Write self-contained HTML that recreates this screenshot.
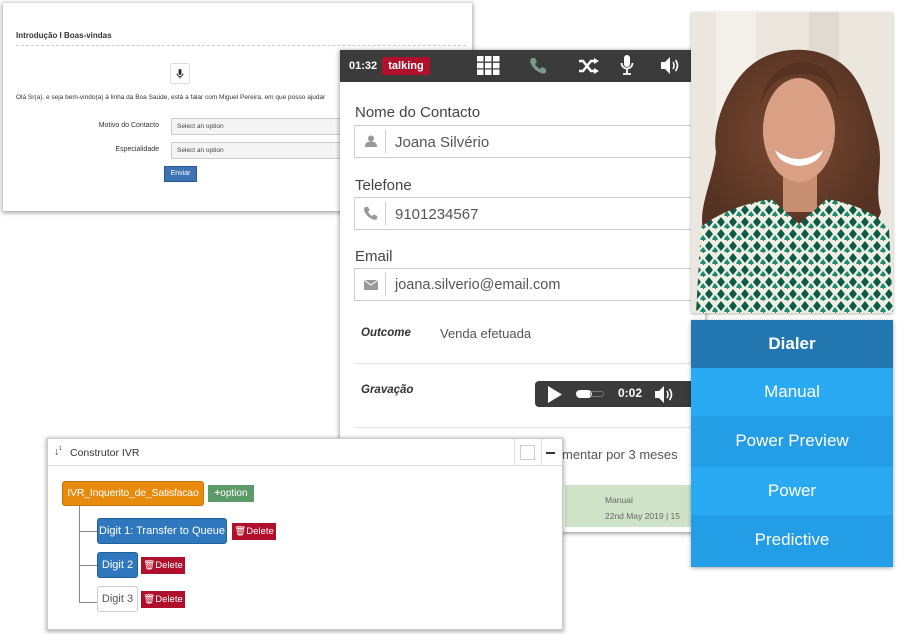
<!DOCTYPE html>
<html><head><meta charset="utf-8"><style>
*{box-sizing:border-box;margin:0;padding:0}
body{width:903px;height:634px;background:#fff;position:relative;overflow:hidden;font-family:"Liberation Sans",sans-serif}
.abs{position:absolute}
.os{font-family:"Liberation Sans",sans-serif;white-space:nowrap}
</style></head><body>

<div class="abs" style="left:3px;top:3px;width:469px;height:208px;background:#fff;box-shadow:0 1px 4px 1px rgba(0,0,0,.35)">
  <div class="abs" style="left:13px;top:28px;font-size:8px;font-weight:bold;color:#333">Introdução I Boas-vindas</div>
  <div class="abs" style="left:13px;top:42px;width:450px;border-top:1px dashed #ccc"></div>
  <div class="abs" style="left:167px;top:60px;width:20px;height:21px;border:1px solid #ddd;border-radius:2px;text-align:center">
    <svg width="8" height="10" viewBox="0 0 8 10" style="margin-top:5px"><rect x="2.5" y="0" width="3" height="6" rx="1.5" fill="#333"/><path d="M1 4.5a3 3 0 0 0 6 0M4 7.5v2" stroke="#333" fill="none"/></svg>
  </div>
  <div class="abs" style="left:13px;top:91px;font-size:6.5px;color:#333;white-space:nowrap">Olá Sr(a). e seja bem-vindo(a) à linha da Boa Saúde, está a falar com Miguel Pereira, em que posso ajudar</div>
  <div class="abs" style="left:60px;top:119px;width:96px;text-align:right;font-size:7px;color:#333">Motivo do Contacto</div>
  <div class="abs" style="left:168px;top:115px;width:180px;height:17px;border:1px solid #ccc;background:#f4f4f4;font-size:6.5px;color:#444;padding:4px 5px">Select an option</div>
  <div class="abs" style="left:60px;top:143px;width:96px;text-align:right;font-size:7px;color:#333">Especialidade</div>
  <div class="abs" style="left:168px;top:139px;width:180px;height:17px;border:1px solid #ccc;background:#f4f4f4;font-size:6.5px;color:#444;padding:4px 5px">Select an option</div>
  <div class="abs" style="left:161px;top:163px;width:33px;height:16px;background:#3d72b4;border:1px solid #2a5a96;color:#fff;font-size:7px;text-align:center;line-height:14px">Enviar</div>
</div>

<div class="abs" style="left:340px;top:50px;width:365px;height:482px;background:#fff;box-shadow:0 1px 4px 1px rgba(0,0,0,.35)">
  <div class="abs" style="left:0;top:0;width:365px;height:32px;background:#3b3b3b"></div>
  <div class="abs os" style="left:9px;top:10px;font-size:11px;font-weight:bold;color:#fff">01:32</div>
  <div class="abs os" style="left:42px;top:7px;width:48px;height:18px;background:#b0102b;border-radius:2px;color:#fff;font-size:11px;font-weight:bold;text-align:center;line-height:18px">talking</div>
  <svg class="abs" style="left:137px;top:6px" width="23" height="19" viewBox="0 0 23 19" fill="#fff"><rect x="0" y="0" width="6.5" height="5.5"/><rect x="8" y="0" width="6.5" height="5.5"/><rect x="16" y="0" width="6.5" height="5.5"/><rect x="0" y="6.8" width="6.5" height="5.5"/><rect x="8" y="6.8" width="6.5" height="5.5"/><rect x="16" y="6.8" width="6.5" height="5.5"/><rect x="0" y="13.5" width="6.5" height="5.5"/><rect x="8" y="13.5" width="6.5" height="5.5"/><rect x="16" y="13.5" width="6.5" height="5.5"/></svg>
  <svg class="abs" style="left:189px;top:7px" width="18" height="18" viewBox="0 0 18 18"><path d="M3 1l3 0 2 4-2 2c1 2 3 4 5 5l2-2 4 2 0 3c-1 2-3 2-5 1C7 14 4 11 2 7 1 5 1 2 3 1z" fill="#7a9a8a"/></svg>
  <svg class="abs" style="left:238px;top:8px" width="22" height="16" viewBox="0 0 22 16"><path d="M1 3h4l8 10h4M1 13h4l8-10h4" stroke="#fff" stroke-width="2.4" fill="none"/><path d="M16 0l5 3-5 3zM16 10l5 3-5 3z" fill="#fff"/></svg>
  <svg class="abs" style="left:280px;top:5px" width="14" height="21" viewBox="0 0 14 21"><rect x="4" y="0" width="6" height="12" rx="3" fill="#fff"/><path d="M1.5 8a5.5 5.5 0 0 0 11 0M7 14v4M3 19h8" stroke="#fff" stroke-width="1.8" fill="none"/></svg>
  <svg class="abs" style="left:321px;top:7px" width="20" height="17" viewBox="0 0 20 17"><path d="M0 5h4l5-5v17l-5-5H0z" fill="#fff"/><path d="M12 5q2 3.5 0 7M14.5 3q4 5.5 0 11" stroke="#fff" stroke-width="1.6" fill="none"/></svg>

  <div class="abs os" style="left:15px;top:54px;font-size:15px;color:#444">Nome do Contacto</div>
  <div class="abs" style="left:14px;top:75px;width:360px;height:33px;border:1px solid #ccc"></div>
  <div class="abs" style="left:45px;top:80px;height:23px;border-left:1px solid #ccc"></div>
  <svg class="abs" style="left:25px;top:85px" width="12" height="12" viewBox="0 0 12 12" fill="#999"><circle cx="6" cy="3.5" r="3"/><path d="M0 12c0-4 2-5.5 6-5.5s6 1.5 6 5.5z"/></svg>
  <div class="abs os" style="left:55px;top:84px;font-size:15px;color:#555">Joana Silvério</div>

  <div class="abs os" style="left:15px;top:127px;font-size:15px;color:#444">Telefone</div>
  <div class="abs" style="left:14px;top:147px;width:360px;height:33px;border:1px solid #ccc"></div>
  <div class="abs" style="left:45px;top:152px;height:23px;border-left:1px solid #ccc"></div>
  <svg class="abs" style="left:23px;top:156px" width="15" height="15" viewBox="0 0 18 18"><path d="M3 1l3 0 2 4-2 2c1 2 3 4 5 5l2-2 4 2 0 3c-1 2-3 2-5 1C7 14 4 11 2 7 1 5 1 2 3 1z" fill="#999"/></svg>
  <div class="abs os" style="left:55px;top:156px;font-size:15px;color:#555">9101234567</div>

  <div class="abs os" style="left:15px;top:198px;font-size:15px;color:#444">Email</div>
  <div class="abs" style="left:14px;top:218px;width:360px;height:33px;border:1px solid #ccc"></div>
  <div class="abs" style="left:45px;top:223px;height:23px;border-left:1px solid #ccc"></div>
  <svg class="abs" style="left:24px;top:230px" width="14" height="10" viewBox="0 0 14 10"><rect width="14" height="10" fill="#999"/><path d="M0 0l7 5 7-5" stroke="#fff" fill="none"/></svg>
  <div class="abs os" style="left:55px;top:227px;font-size:14.5px;color:#555">joana.silverio@email.com</div>

  <div class="abs os" style="left:21px;top:277px;font-size:11.5px;font-weight:bold;font-style:italic;color:#333">Outcome</div>
  <div class="abs os" style="left:100px;top:276px;font-size:13px;color:#555">Venda efetuada</div>
  <div class="abs" style="left:14px;top:313px;width:351px;border-top:1px solid #e2e2e2"></div>
  <div class="abs os" style="left:21px;top:334px;font-size:11.5px;font-weight:bold;font-style:italic;color:#333">Gravação</div>
  <div class="abs" style="left:195px;top:331px;width:175px;height:26px;background:#3b3b3b;border-radius:4px"></div>
  <svg class="abs" style="left:207px;top:336px" width="16" height="17" viewBox="0 0 16 17"><path d="M1 0l14 8.5L1 17z" fill="#fff"/></svg>
  <div class="abs" style="left:236px;top:340px;width:16px;height:8px;background:#fff;border-radius:4px"></div>
  <div class="abs" style="left:250px;top:341px;width:14px;height:6px;border:1px solid #777;border-radius:3px"></div>
  <div class="abs os" style="left:278px;top:336px;font-size:12px;font-weight:bold;color:#fff">0:02</div>
  <svg class="abs" style="left:314px;top:336px" width="22" height="17" viewBox="0 0 20 17"><path d="M0 5h4l5-5v17l-5-5H0z" fill="#fff"/><path d="M12 5q2 3.5 0 7M14.5 3q4 5.5 0 11" stroke="#fff" stroke-width="1.6" fill="none"/></svg>
  <div class="abs" style="left:14px;top:377px;width:351px;border-top:1px solid #e2e2e2"></div>
  <div class="abs os" style="left:222px;top:397px;font-size:13px;color:#555">mentar por 3 meses</div>
  <div class="abs" style="left:225px;top:435px;width:140px;height:42px;background:#cfe3c8"></div>
  <div class="abs os" style="left:265px;top:445px;font-size:8.5px;color:#666">Manual</div>
  <div class="abs os" style="left:265px;top:461px;font-size:8.5px;color:#666">22nd May 2019 | 15</div>
</div>

<svg class="abs" style="left:691px;top:12px;box-shadow:0 1px 3px rgba(0,0,0,.3)" width="202" height="301" viewBox="0 0 202 301">
  <defs>
    <pattern id="p" width="12" height="12" patternUnits="userSpaceOnUse">
      <rect width="12" height="12" fill="#eef0e6"/>
      <path d="M6 1l4 5-4 5-4-5z" fill="#0f5a46"/>
      <path d="M0 7l3 4-3 4zM12 7l-3 4 3 4z" fill="#1d8a6a"/>
      <circle cx="0" cy="0" r="1" fill="#222"/>
    </pattern>
    <radialGradient id="hair" cx=".5" cy=".45" r=".55"><stop offset="0" stop-color="#7a4a32"/><stop offset="1" stop-color="#553222"/></radialGradient>
  </defs>
  <rect width="202" height="301" fill="#ebe7df"/>
  <rect x="25" y="0" width="40" height="301" fill="#f3f0ea"/>
  <rect x="118" y="0" width="30" height="130" fill="#e0dad0"/>
  <path d="M14 225C4 200 22 170 25 140 20 110 40 70 58 55 80 35 120 32 145 48 170 62 178 95 185 120 195 150 182 175 190 200 185 215 175 225 165 230z" fill="url(#hair)"/>
  <rect x="92" y="160" width="34" height="40" fill="#c98f73"/>
  <ellipse cx="108" cy="118" rx="36" ry="52" fill="#d9a086"/>
  <path d="M84 138q24 18 48 0q-4 14-24 16q-20-2-24-16z" fill="#fff"/>
  <path d="M68 95q10-45 45-45q30 2 35 40q-10-30-38-28q-30 0-42 33z" fill="#553222"/>
  <path d="M5 301L10 215q25-20 70-28l28 25 28-25q45 8 62 30l4 84z" fill="url(#p)"/>
</svg>

<div class="abs" style="left:691px;top:320px;width:202px;height:247px;box-shadow:0 1px 4px rgba(0,0,0,.35)">
  <div class="os" style="height:48px;background:#2277b0;color:#fff;font-size:17px;font-weight:bold;text-align:center;line-height:47px">Dialer</div>
  <div class="os" style="height:48px;background:#29aaf3;color:#fff;font-size:17px;text-align:center;line-height:47px">Manual</div>
  <div class="os" style="height:51px;background:#239de5;color:#fff;font-size:17px;text-align:center;line-height:50px">Power Preview</div>
  <div class="os" style="height:48px;background:#29aaf3;color:#fff;font-size:17px;text-align:center;line-height:47px">Power</div>
  <div class="os" style="height:52px;background:#239de5;color:#fff;font-size:17px;text-align:center;line-height:50px">Predictive</div>
</div>

<div class="abs" style="left:47px;top:438px;width:516px;height:192px;background:#fff;border:1px solid #ccc;box-shadow:0 1px 4px 1px rgba(0,0,0,.3)">
  <div class="abs" style="left:0;top:0;width:514px;height:27px;border-bottom:1px solid #ddd"></div>
  <div class="abs os" style="left:6px;top:7px;font-size:10px;color:#333">↓<sup style="font-size:5px">1</sup></div>
  <div class="abs os" style="left:22px;top:8px;font-size:10.5px;color:#333">Construtor IVR</div>
  <div class="abs" style="left:466px;top:0;width:1px;height:27px;background:#ddd"></div>
  <div class="abs" style="left:472px;top:6px;width:15px;height:15px;border:1px solid #ccc"></div>
  <div class="abs" style="left:493px;top:0;width:1px;height:27px;background:#ddd"></div>
  <div class="abs" style="left:498px;top:13px;width:9px;height:2px;background:#333"></div>
  <div class="abs" style="left:31px;top:67px;width:1px;height:97px;background:#888"></div>
  <div class="abs" style="left:31px;top:92px;width:18px;height:1px;background:#888"></div>
  <div class="abs" style="left:31px;top:126px;width:18px;height:1px;background:#888"></div>
  <div class="abs" style="left:31px;top:163px;width:18px;height:1px;background:#888"></div>
  <div class="abs os" style="left:14px;top:42px;width:142px;height:25px;background:#e88a0c;border:1px solid #c87308;border-radius:3px;color:#fff;font-size:10.5px;letter-spacing:-.2px;line-height:23px;text-align:center">IVR_Inquerito_de_Satisfacao</div>
  <div class="abs os" style="left:160px;top:46px;width:46px;height:17px;background:#5d9a6a;color:#fff;font-size:10px;line-height:17px;text-align:center"><b>+</b>option</div>
  <div class="abs os" style="left:49px;top:79px;width:130px;height:26px;background:#2f78be;border:1px solid #245f98;border-radius:3px;color:#fff;font-size:11px;line-height:24px;text-align:center">Digit 1: Transfer to Queue</div>
  <div class="abs os" style="left:184px;top:84px;width:44px;height:17px;background:#b0102b;color:#fff;font-size:9.5px;line-height:17px;text-align:center">🗑Delete</div>
  <div class="abs os" style="left:49px;top:113px;width:41px;height:26px;background:#2f78be;border:1px solid #245f98;border-radius:3px;color:#fff;font-size:11px;line-height:24px;text-align:center">Digit 2</div>
  <div class="abs os" style="left:93px;top:118px;width:44px;height:17px;background:#b0102b;color:#fff;font-size:9.5px;line-height:17px;text-align:center">🗑Delete</div>
  <div class="abs os" style="left:49px;top:147px;width:41px;height:26px;background:#fff;border:1px solid #ccc;border-radius:3px;color:#555;font-size:11px;line-height:24px;text-align:center">Digit 3</div>
  <div class="abs os" style="left:93px;top:152px;width:44px;height:17px;background:#b0102b;color:#fff;font-size:9.5px;line-height:17px;text-align:center">🗑Delete</div>
</div>
</body></html>
